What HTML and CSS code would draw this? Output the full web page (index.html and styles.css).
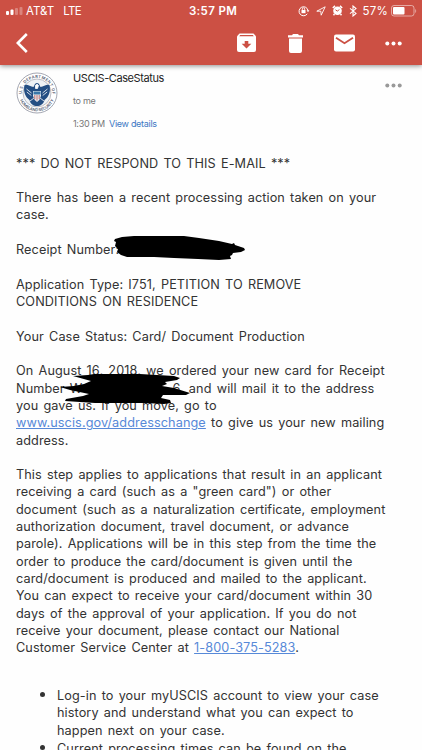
FILE: index.html
```html
<!DOCTYPE html>
<html lang="en">
<head>
  <meta charset="UTF-8">
  <meta name="viewport" content="width=device-width, initial-scale=1.0">
  <title>USCIS-CaseStatus</title>
  <link rel="stylesheet" href="styles.css">
</head>
<body>
  <header class="topbar">
    <div class="status">
      <div class="carrier">
        <svg class="signal" width="17" height="8" viewBox="0 0 17 8" fill="#fff">
          <rect x="0" y="4" width="3" height="4" rx="1"/>
          <rect x="4.5" y="2.5" width="3" height="5.5" rx="1"/>
          <rect x="9" y="1" width="3" height="7" rx="1" opacity=".3"/>
          <rect x="13.5" y="0" width="3" height="8" rx="1" opacity=".3"/>
        </svg>
        <span>AT&amp;T</span>
        <span class="network">LTE</span>
      </div>
      <div class="time">3:57 PM</div>
      <div class="indicators">
        <svg width="12" height="12" viewBox="0 0 12 12" fill="none" stroke="#fff">
          <path d="M9.3 8.8A4.5 4.5 0 1 1 10 5.5"/>
          <path d="M8.6 5.3h2.8L10 7.2z" fill="#fff" stroke="none"/>
          <rect x="3.5" y="5" width="4" height="3.2" fill="#fff" stroke="none"/>
          <path d="M4.3 5V4a1.2 1.2 0 0 1 2.4 0v1" stroke-width=".8"/>
        </svg>
        <svg width="10" height="10" viewBox="0 0 10 10" fill="none" stroke="#fff" stroke-width=".9" stroke-linejoin="round">
          <path d="M.8 5.2 9.2.8 5.2 9.2 4.8 5.2z"/>
        </svg>
        <svg width="11" height="11" viewBox="0 0 11 11" fill="none" stroke="#fff">
          <circle cx="5.5" cy="5.8" r="4.3" fill="#fff" stroke="none"/>
          <path d="M.8 3 3 .9M8 .9 10.2 3M2.5 9 1.5 10.2M8.5 9l1 1.2" stroke-width="1.5"/>
          <path d="M3.5 4.8l2 1.4L7.2 4.4" stroke="#cc5044"/>
        </svg>
        <svg class="bluetooth" width="8" height="12" viewBox="0 0 8 12" fill="none" stroke="#fff" stroke-width="1.1">
          <path d="M1 3.3 7 8.4 4 11V1l3 2.6-6 5.1"/>
        </svg>
        <span class="percent">57%</span>
        <svg class="battery" width="26" height="12" viewBox="0 0 26 12">
          <rect x=".5" y=".5" width="22.5" height="10.5" rx="2.5" fill="none" stroke="#fff" opacity=".5"/>
          <rect x="2" y="2" width="11.5" height="7.5" rx="1" fill="#fff"/>
          <path d="M24.2 4v4c1.3-.5 1.3-3.5 0-4z" fill="#fff" opacity=".5"/>
        </svg>
      </div>
    </div>
    <nav class="toolbar">
      <svg class="back" width="12" height="20" viewBox="0 0 12 20" fill="none" stroke="#fff" stroke-width="2.6">
        <path d="M10.8 1 1.8 10l9 9"/>
      </svg>
      <svg class="archive" width="19" height="20" viewBox="0 0 19 20">
        <path d="M2.5.5h14L19 3.3V17a2 2 0 0 1-2 2H2a2 2 0 0 1-2-2V3.3z" fill="#fff"/>
        <path d="M2.2 3.2 3.2 2h12.6l1 1.2zM7.7 8h3.6v2.7h3L9.5 15.4 4.7 10.7h3z" fill="#cc5044"/>
      </svg>
      <svg class="trash" width="15" height="19" viewBox="0 0 15 19" fill="#fff">
        <path d="M0 1.2h4L5 0h5l1 1.2h4v2.2H0zM1 4.5h13V17a2 2 0 0 1-2 2H3a2 2 0 0 1-2-2z"/>
      </svg>
      <svg class="mail" width="21" height="18" viewBox="0 0 21 18">
        <rect y=".5" width="21" height="17" rx="2" fill="#fff"/>
        <path d="M2 3.8 10.5 9.3 19 3.8" fill="none" stroke="#cc5044" stroke-width="1.8"/>
      </svg>
      <svg class="more" width="17" height="5" viewBox="0 0 17 5" fill="#fff">
        <circle cx="2.3" cy="2.5" r="2"/><circle cx="8.5" cy="2.5" r="2"/><circle cx="14.7" cy="2.5" r="2"/>
      </svg>
    </nav>
  </header>

  <section class="sender">
    <svg class="seal" width="42" height="42" viewBox="0 0 42 42">
      <defs>
        <path id="upper" d="M5.9 23A15.2 15.2 0 1 1 36.1 23"/>
        <path id="lower" d="M3.7 27A18.3 18.3 0 0 0 38.3 27"/>
      </defs>
      <circle cx="21" cy="21" r="20" fill="#fff" stroke="#8d919e" stroke-width=".8"/>
      <circle cx="21" cy="21" r="14" fill="#eff2f5" stroke="#a5a5b0" stroke-width=".7"/>
      <text class="seal-text"><textPath href="#upper" startOffset="1" textLength="49">U.S. DEPARTMENT OF</textPath></text>
      <text class="seal-text"><textPath href="#lower" startOffset="1" textLength="43">HOMELAND SECURITY</textPath></text>
      <path d="M8.5 13c3-1 6 2 9 2l1.5-3q2-2 4 0l1.5 3c3 0 6-3 9-2 1.5 7-1 12-5 15-1 4-4 6-7.5 6s-6.5-2-7.5-6c-4-3-6.5-8-5-15z" fill="#244e83"/>
      <path d="M17 19h8v5q-1 4-4 6-3-2-4-6z" fill="#e9edf2"/>
      <path d="M17.5 19.5h7v3h-7z" fill="#3976a8"/>
      <path d="M18.8 23v4M21 23v5.5M23.2 23v4" stroke="#b54e4d" stroke-width=".8"/>
      <path d="M19.5 13.3q2-2 3 .2l-1 3h-2zM10.5 17l5 4M10.8 20l4.5 3.5M31.5 17l-5 4M31.2 20l-4.5 3.5M14 29l4-3M28 29l-4-3" fill="#fff" stroke="#fff" stroke-width=".8"/>
    </svg>
    <div class="sender-info">
      <div class="name">USCIS-CaseStatus</div>
      <div class="to">to me</div>
      <div class="date">1:30 PM <a class="details">View details</a></div>
    </div>
    <svg class="options" width="17" height="5" viewBox="0 0 17 5" fill="#999">
      <circle cx="2.3" cy="2.5" r="2"/><circle cx="8.5" cy="2.5" r="2"/><circle cx="14.7" cy="2.5" r="2"/>
    </svg>
  </section>

  <main class="message">
    <p>*** DO NOT RESPOND TO THIS E-MAIL ***</p>
    <p>There has been a recent processing action taken on your<br>case.</p>
    <p class="covered">Receipt Number:
      <svg class="marker receipt" width="132" height="27" viewBox="0 0 132 27">
        <path d="M1 3 8 1 20 0 70 0 85 2 105 5 118 8 120 7 121 9 130 12 131 14 127 16 119 17 118 19 116 20 117 23 105 24 84 23 60 22 40 21 13 21 7 19 3 16 4 13 1 10 2 6 0 5z"/>
      </svg>
    </p>
    <p>Application Type: I751, PETITION TO REMOVE<br>CONDITIONS ON RESIDENCE</p>
    <p>Your Case Status: Card/ Document Production</p>
    <p class="covered">On August 16, 2018, we ordered your new card for Receipt<br>Number W<span class="gap"></span>6, and will mail it to the address<br>you gave us. If you move, go to<br><a class="link">www.uscis.gov/addresschange</a> to give us your new mailing<br>address.
      <svg class="marker number" width="132" height="32" viewBox="0 0 132 32">
        <path d="M13 2 28 1 34 0 80 0 114 2 120 4 117 6 105 8 107 10 102 12 114 14 130 19 126 21 103 21 101 24 110 26 111 29 104 30 85 29 35 29 5 27 6 25 23 22 29 20 10 16 0 13 14 12 24 10 31 7z"/>
      </svg>
    </p>
    <p class="step">This step applies to applications that result in an applicant<br>receiving a card (such as a "green card") or other<br>document (such as a naturalization certificate, employment<br>authorization document, travel document, or advance<br>parole). Applications will be in this step from the time the<br>order to produce the card/document is given until the<br>card/document is produced and mailed to the applicant.<br>You can expect to receive your card/document within 30<br>days of the approval of your application. If you do not<br>receive your document, please contact our National<br>Customer Service Center at <a class="link">1-800-375-5283</a>.</p>
    <ul>
      <li>Log-in to your myUSCIS account to view your case<br>history and understand what you can expect to<br>happen next on your case.</li>
      <li>Current processing times can be found on the</li>
    </ul>
  </main>
</body>
</html>
```
FILE: styles.css
```css
body {
  margin: 0;
  height: 750px;
  overflow: hidden;
  background: #fefefe;
  color: #333;
  font-family: Inter, "Liberation Sans", sans-serif;
}
svg {
  display: block;
  flex: none;
}
.topbar {
  height: 65px;
  background: #cc5044;
  color: #fff;
  box-shadow: 0 1px 5px rgba(0, 0, 0, .45);
}
.status {
  display: grid;
  grid-template-columns: 1fr auto 1fr;
  align-items: center;
  height: 21px;
  padding: 0 5px 0 6px;
  font-size: 11.5px;
}
.carrier {
  display: flex;
  align-items: center;
  gap: 3px;
}
.network {
  margin-left: 6px;
  letter-spacing: -.6px;
}
.time {
  padding-left: 3px;
  font-weight: 600;
  letter-spacing: .35px;
}
.indicators {
  display: flex;
  align-items: center;
  justify-content: flex-end;
  gap: 6px;
}
.percent {
  letter-spacing: .2px;
}
.battery {
  margin-left: -3px;
}
.toolbar {
  display: flex;
  align-items: center;
  height: 44px;
  padding-left: 16px;
}
.archive {
  margin-left: 209px;
}
.trash {
  margin-left: 32px;
}
.mail {
  margin-left: 31px;
}
.more {
  margin-left: 30px;
}
.sender {
  display: flex;
  height: 89.5px;
  padding: 0 20px 0 16px;
}
.seal {
  margin-top: 7px;
}
.seal-text {
  fill: #535b72;
  font-size: 4px;
  font-weight: 600;
}
.sender-info {
  flex: 1;
  margin-left: 15px;
  padding-top: 5px;
  color: #777;
  font-size: 9px;
  letter-spacing: -.3px;
}
.name {
  color: #222;
  font-size: 11px;
  line-height: 16px;
  letter-spacing: -.42px;
}
.to {
  margin-top: 9px;
  line-height: 12px;
}
.date {
  margin-top: 11px;
  line-height: 12px;
}
.details {
  margin-left: 2px;
  color: #3c78c3;
}
.options {
  margin-top: 18px;
}
.message {
  padding-left: 16px;
  font-size: 12.7px;
  line-height: 17.32px;
  letter-spacing: .09px;
  word-spacing: 1.5px;
  white-space: nowrap;
}
.message p {
  margin: 0 0 17.32px;
}
.link {
  color: #5789d8;
  text-decoration: underline;
}
.covered {
  position: relative;
}
.marker {
  position: absolute;
  fill: #000;
}
.receipt {
  left: 98px;
  top: -5px;
}
.number {
  left: 44px;
  top: 12px;
}
.gap {
  display: inline-block;
  width: 90px;
}
.message ul {
  margin: 29.5px 0 0;
  padding-left: 41px;
}
.message li::marker {
  font-size: 15px;
}
```
